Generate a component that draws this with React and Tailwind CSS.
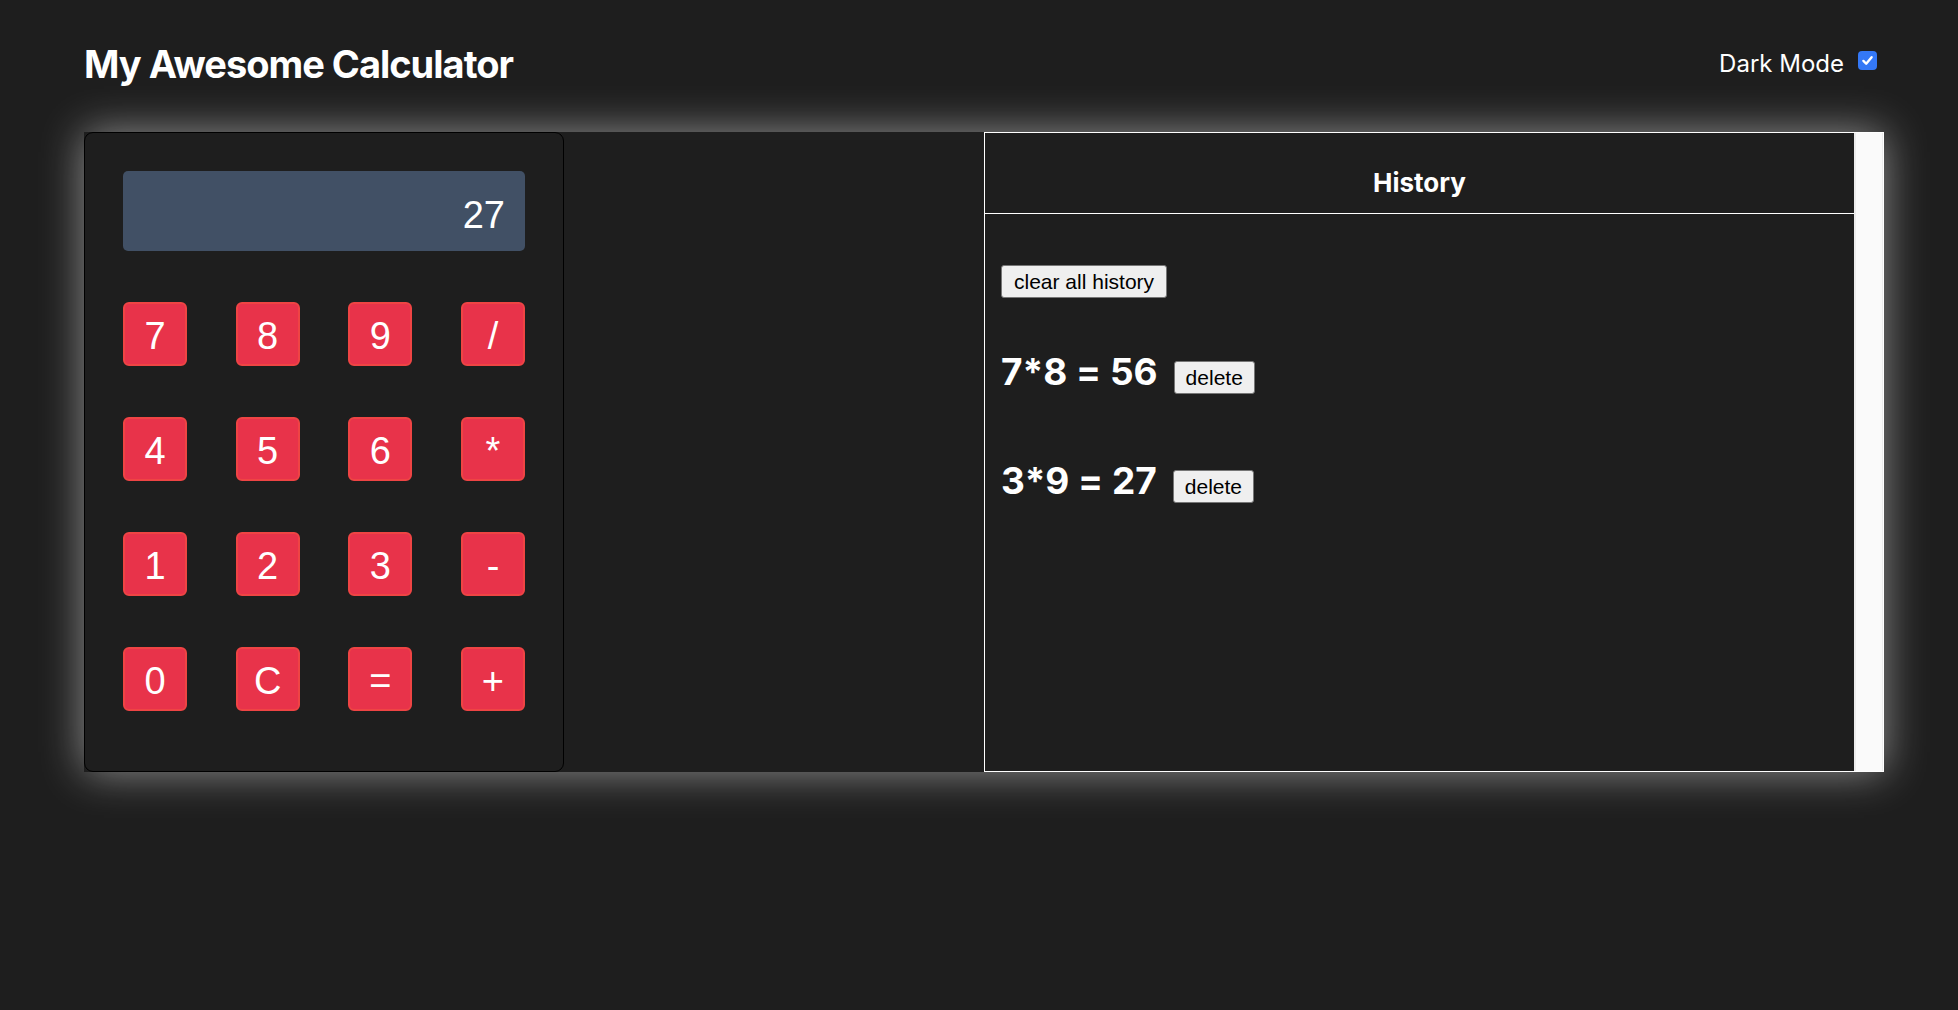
import React, { useState } from 'react';

const KEYS = [
  ['7', '8', '9', '/'],
  ['4', '5', '6', '*'],
  ['1', '2', '3', '-'],
  ['0', 'C', '=', '+'],
];

const HISTORY = ['7*8 = 56', '3*9 = 27'];

function Key({ label }) {
  return (
    <button className="w-[64px] h-[64px] flex items-center justify-center pt-[3px] bg-[#e8334a] border-2 border-[#ef4444] rounded-[6px] text-white text-[38px] leading-none font-['Liberation_Sans',Arial,sans-serif]">
      {label}
    </button>
  );
}

function App() {
  const [dark] = useState(true);
  const [history] = useState(HISTORY);

  return (
    <div className="min-h-screen w-full bg-[#1e1e1e] px-[84px] pt-[44px] font-['Inter',sans-serif] text-white">
      {/* header */}
      <div className="w-[1800px] flex items-start justify-between">
        <h1 className="text-[38px] leading-[40px] font-bold tracking-[-1px]">My Awesome Calculator</h1>
        <label className="mt-[7px] mr-[7px] flex items-start gap-[14px]">
          <span className="text-[24px] leading-[25px]">Dark Mode</span>
          <span className="w-[19px] h-[19px] rounded-[4px] bg-[#3478f6] flex items-center justify-center">
            {dark && (
              <svg width="13" height="13" viewBox="0 0 12 12" fill="none">
                <path d="M2.2 6.4 L4.8 9 L9.8 3" stroke="white" strokeWidth="2.2" strokeLinecap="round" strokeLinejoin="round" />
              </svg>
            )}
          </span>
        </label>
      </div>

      {/* main */}
      <div className="mt-[48px] w-[1800px] h-[640px] flex bg-[#1e1e1e] shadow-[0_0_40px_rgba(255,255,255,0.5)]">
        {/* calculator */}
        <div className="w-[480px] border border-black rounded-[9px] px-[38px] pt-[38px]">
          <div className="h-[80px] bg-[#415065] rounded-[5px] flex items-center justify-end pr-[20px] pt-[7px] text-[38px] leading-none font-['Liberation_Sans',Arial,sans-serif]">
            27
          </div>
          <div className="mt-[51px] flex flex-col gap-[51px]">
            {KEYS.map((row, i) => (
              <div key={i} className="flex justify-between">
                {row.map((k) => (
                  <Key key={k} label={k} />
                ))}
              </div>
            ))}
          </div>
        </div>

        {/* history */}
        <div className="ml-auto w-[900px] border border-white flex">
          <div className="flex-1 flex flex-col">
            <div className="h-[81px] border-b border-white flex justify-center pt-[34px]">
              <h2 className="text-[26px] leading-[32px] font-bold">History</h2>
            </div>
            <div className="pl-[16px] pt-[51px]">
              <button className="h-[33px] px-[12px] bg-[#efefef] border border-[#767676] rounded-[3px] text-black text-[21px] leading-none font-['Liberation_Sans',Arial,sans-serif]">
                clear all history
              </button>
              {history.map((h, i) => (
                <div key={i} className={`flex items-baseline gap-[16px] ${i === 0 ? 'mt-[55px]' : 'mt-[68px]'}`}>
                  <h2 className="text-[37px] leading-[38px] font-bold [font-feature-settings:'calt'_0]">{h}</h2>
                  <button className="h-[33px] px-[11px] bg-[#efefef] border border-[#767676] rounded-[3px] text-black text-[21px] leading-none font-['Liberation_Sans',Arial,sans-serif]">
                    delete
                  </button>
                </div>
              ))}
            </div>
          </div>
          {/* scrollbar track */}
          <div className="w-[29px] bg-[#fafafa] border-l-2 border-r border-l-[#ececec] border-r-[#ececec]" />
        </div>
      </div>
    </div>
  );
}

export default App;
